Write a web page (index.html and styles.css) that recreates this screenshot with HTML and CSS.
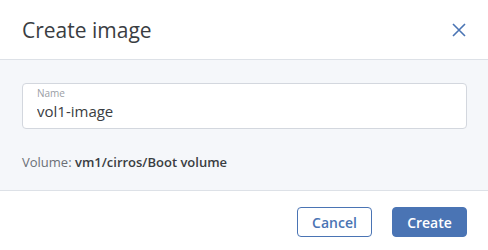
FILE: index.html
```html
<!DOCTYPE html>
<html lang="en">
<head>
  <meta charset="UTF-8">
  <title>Create image</title>
  <link rel="stylesheet" href="styles.css">
</head>
<body>

  <div class="modal">
    <div class="modal-header">
      <h2>Create image</h2>
      <button class="close" type="button" aria-label="Close">
        <svg width="14" height="14" viewBox="0 0 14 14">
          <path d="M1 1 L13 13 M13 1 L1 13" stroke="currentColor" stroke-width="1.6" fill="none"/>
        </svg>
      </button>
    </div>

    <div class="modal-body">
      <label class="field">
        <span class="field-label">Name</span>
        <input type="text" value="vol1-image">
      </label>
      <p class="info">Volume: <b>vm1/cirros/Boot volume</b></p>
    </div>

    <div class="modal-footer">
      <button class="btn btn-outline" type="button">Cancel</button>
      <button class="btn btn-primary" type="button">Create</button>
    </div>
  </div>

</body>
</html>
```

FILE: styles.css
```css
:root {
  --primary: #4a74b4;
  --text: #3a3d42;
  --muted: #6b6f76;
  --line: #dde1e7;
  --bg: #f5f7fa;
}
body {
  margin: 0;
  font-family: 'Open Sans', sans-serif;
  color: var(--text);
  background: #fff;
}
.modal {
  width: 488px;
  height: 250px;
  display: flex;
  flex-direction: column;
}
.modal-header {
  height: 59px;
  padding: 0 22px 0 22px;
  display: flex;
  align-items: center;
  justify-content: space-between;
  border-bottom: 1px solid var(--line);
}
h2 {
  margin: 0;
  font-size: 21px;
  font-weight: 400;
  line-height: 28px;
  color: var(--text);
}
.close {
  background: none;
  border: none;
  padding: 0;
  width: 14px;
  height: 14px;
  color: var(--primary);
  cursor: pointer;
  display: flex;
}
.modal-body {
  background: var(--bg);
  padding: 23px 21px 19px 22px;
}
.field {
  display: block;
  background: #fff;
  border: 1px solid #d3d7de;
  border-radius: 4px;
  padding: 3px 14px 7px;
}
.field-label {
  display: block;
  font-size: 10px;
  line-height: 12px;
  margin-bottom: 2px;
  color: #9a9ea5;
}
.field input {
  display: block;
  width: 100%;
  border: none;
  outline: none;
  padding: 0;
  margin: 0;
  font-family: inherit;
  font-size: 15px;
  line-height: 20px;
  height: 20px;
  color: var(--text);
  background: transparent;
}
.info {
  margin: 24px 0 0;
  font-size: 13px;
  line-height: 18px;
  color: var(--muted);
}
.info b {
  font-weight: 600;
  color: var(--text);
}
.modal-footer {
  flex: 1;
  border-top: 1px solid var(--line);
  padding: 16px 21px 0;
  display: flex;
  justify-content: flex-end;
  align-items: flex-start;
  gap: 20px;
}
.btn {
  width: 75px;
  height: 30px;
  border-radius: 4px;
  font-family: inherit;
  font-size: 14px;
  font-weight: 600;
  cursor: pointer;
}
.btn-outline {
  background: #fff;
  color: var(--primary);
  border: 1px solid var(--primary);
}
.btn-primary {
  background: var(--primary);
  color: #fff;
  border: 1px solid var(--primary);
}
```
